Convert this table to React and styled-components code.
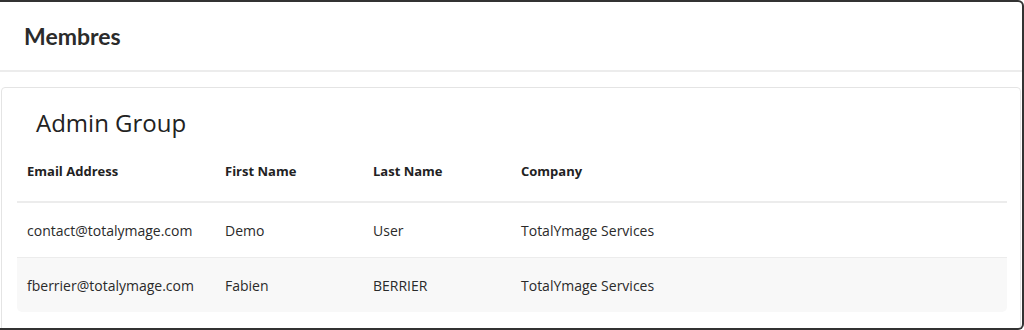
import React from 'react'
import styled, { createGlobalStyle } from 'styled-components'

const GlobalStyle = createGlobalStyle`
    body {
        margin: 0;
        background: #fff;
        font-family: "Open Sans", "Noto Sans", sans-serif;
        color: #222;
    }
`

const Frame = styled.div`
    width: 1024px;
    height: 330px;
    box-sizing: border-box;
    border: 2px solid #333;
    border-left: none;
    border-radius: 0 6px 6px 0;
    background: #fff;
    overflow: hidden;
`

const Header = styled.div`
    height: 70px;
    box-sizing: border-box;
    border-bottom: 2px solid #ececec;
    padding: 0 0 0 24px;
    display: flex;
    align-items: center;

    h1 {
        margin: 0;
        font-family: Lato, sans-serif;
        font-weight: 700;
        font-size: 23px;
        color: #2b2b2b;
    }
`

const Card = styled.div`
    margin: 15px 1px 0 1px;
    border: 1px solid #e4e4e4;
    border-radius: 4px;
    padding: 0 13px 0 15px;
    height: 280px;
    box-sizing: border-box;

    h2 {
        margin: 0;
        padding: 16px 0 0 19px;
        font-weight: 400;
        font-size: 24px;
        line-height: 38px;
        color: #222;
    }
`

const Table = styled.table`
    width: 100%;
    border-collapse: collapse;
    font-size: 14px;

    th {
        text-align: left;
        font-weight: 700;
        font-size: 13px;
        line-height: 18px;
        padding: 20px 10px 21px;
        border-bottom: 2px solid #ececec;
        color: #222;
    }

    td {
        padding: 0 10px;
        height: 54px;
        color: #2a2a2a;
    }
`

const Col = styled.col`
    width: ${p => p.$width || 'auto'};
`

const Row = styled.tr`
    background: ${p => (p.$striped ? '#f8f8f8' : '#fff')};
    border-bottom: ${p => (p.$last ? 'none' : '1px solid #ececec')};

    td:first-child { border-bottom-left-radius: ${p => (p.$last ? '5px' : '0')}; }
    td:last-child { border-bottom-right-radius: ${p => (p.$last ? '5px' : '0')}; }
`

const members = [
    { email: 'contact@totalymage.com', first: 'Demo', last: 'User', company: 'TotalYmage Services' },
    { email: 'fberrier@totalymage.com', first: 'Fabien', last: 'BERRIER', company: 'TotalYmage Services' },
]

const App = () => {
    return (
        <Frame>
            <GlobalStyle />
            <Header>
                <h1>Membres</h1>
            </Header>
            <Card>
                <h2>Admin Group</h2>
                <Table>
                    <colgroup>
                        <Col $width="198px" />
                        <Col $width="148px" />
                        <Col $width="148px" />
                        <Col />
                    </colgroup>
                    <thead>
                        <tr>
                            <th>Email Address</th>
                            <th>First Name</th>
                            <th>Last Name</th>
                            <th>Company</th>
                        </tr>
                    </thead>
                    <tbody>
                        {members.map((m, i) => (
                            <Row key={m.email} $striped={i % 2 === 1} $last={i === members.length - 1}>
                                <td>{m.email}</td>
                                <td>{m.first}</td>
                                <td>{m.last}</td>
                                <td>{m.company}</td>
                            </Row>
                        ))}
                    </tbody>
                </Table>
            </Card>
        </Frame>
    )
}

export default App
